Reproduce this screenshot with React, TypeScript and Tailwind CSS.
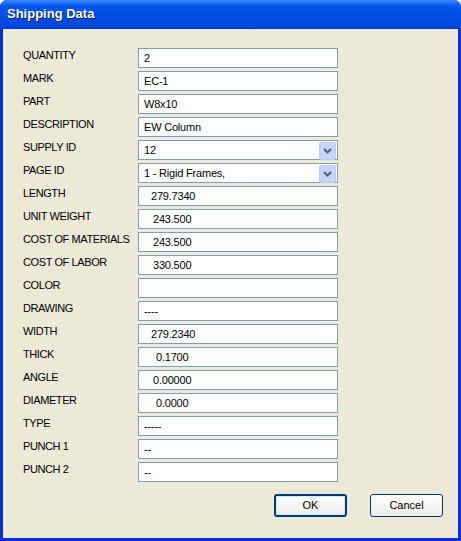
import React from 'react';

type Field = {
  label: string;
  value: string;
  indent?: string;
  select?: boolean;
};

const fields: Field[] = [
  { label: 'QUANTITY', value: '2' },
  { label: 'MARK', value: 'EC-1' },
  { label: 'PART', value: 'W8x10' },
  { label: 'DESCRIPTION', value: 'EW Column' },
  { label: 'SUPPLY ID', value: '12', select: true },
  { label: 'PAGE ID', value: '1 - Rigid Frames,', select: true },
  { label: 'LENGTH', value: '279.7340', indent: 'pl-[12px]' },
  { label: 'UNIT WEIGHT', value: '243.500', indent: 'pl-[14px]' },
  { label: 'COST OF MATERIALS', value: '243.500', indent: 'pl-[14px]' },
  { label: 'COST OF LABOR', value: '330.500', indent: 'pl-[14px]' },
  { label: 'COLOR', value: '' },
  { label: 'DRAWING', value: '----' },
  { label: 'WIDTH', value: '279.2340', indent: 'pl-[12px]' },
  { label: 'THICK', value: '0.1700', indent: 'pl-[17px]' },
  { label: 'ANGLE', value: '0.00000', indent: 'pl-[14px]' },
  { label: 'DIAMETER', value: '0.0000', indent: 'pl-[17px]' },
  { label: 'TYPE', value: '-----' },
  { label: 'PUNCH 1', value: '--' },
  { label: 'PUNCH 2', value: '--' },
];

const DropArrow = () => (
  <div className="absolute right-[1px] top-[1px] w-[17px] h-[18px] rounded-[2px] bg-[#C4D6FB] border border-[#B8CCF5] flex items-center justify-center">
    <svg width="9" height="6" viewBox="0 0 9 6">
      <path d="M1 1 L4.5 4.5 L8 1" fill="none" stroke="#4D6185" strokeWidth="2" />
    </svg>
  </div>
);

const FieldRow = ({ field }: { field: Field }) => (
  <div className="flex items-start h-[20px]">
    <div className="w-[115px] pt-[1px] text-[11px] leading-[13px] tracking-[-0.4px] text-black whitespace-nowrap">
      {field.label}
    </div>
    <div className="relative w-[200px] h-[20px] bg-white border border-[#7F9DB9] flex items-center">
      <span className={`${field.indent ?? 'pl-[5px]'} text-[11px] leading-[13px] tracking-[-0.2px] text-black whitespace-pre`}>
        {field.value}
      </span>
      {field.select && <DropArrow />}
    </div>
  </div>
);

export default function App() {
  return (
    <div
      className="w-[461px] h-[541px] flex flex-col bg-[#0831D9] rounded-t-[7px] overflow-hidden"
      style={{ fontFamily: '"Liberation Sans", Arial, sans-serif' }}
    >
      {/* title bar */}
      <div className="h-[29px] shrink-0 flex items-center pl-[7px] bg-gradient-to-b from-[#3A8CF7] via-[#0058EE] via-[20%] to-[#0044DA] border-b border-[#0037C8]">
        <span
          className="text-white font-bold text-[13px]"
          style={{ textShadow: '1px 1px 0 #0A1E6A' }}
        >
          Shipping Data
        </span>
      </div>

      {/* client area */}
      <div className="flex-1 mx-[3px] mb-[3px] bg-[#ECE9D8] flex flex-col pt-[19px] pl-[20px]">
        <div className="flex flex-col gap-[3px]">
          {fields.map((f) => (
            <FieldRow key={f.label} field={f} />
          ))}
        </div>

        <div className="flex justify-end gap-[23px] mt-[12px] pr-[15px]">
          <button className="w-[73px] h-[23px] rounded-[3px] border-2 border-[#003C74] bg-gradient-to-b from-[#FFFFFF] to-[#ECEBE6] text-[11px] text-black flex items-center justify-center shadow-[inset_0_0_0_1px_#CEE7FF]">
            OK
          </button>
          <button className="w-[73px] h-[23px] rounded-[3px] border border-[#003C74] bg-gradient-to-b from-[#FFFFFF] to-[#ECEBE6] text-[11px] text-black flex items-center justify-center">
            Cancel
          </button>
        </div>
      </div>
    </div>
  );
}
